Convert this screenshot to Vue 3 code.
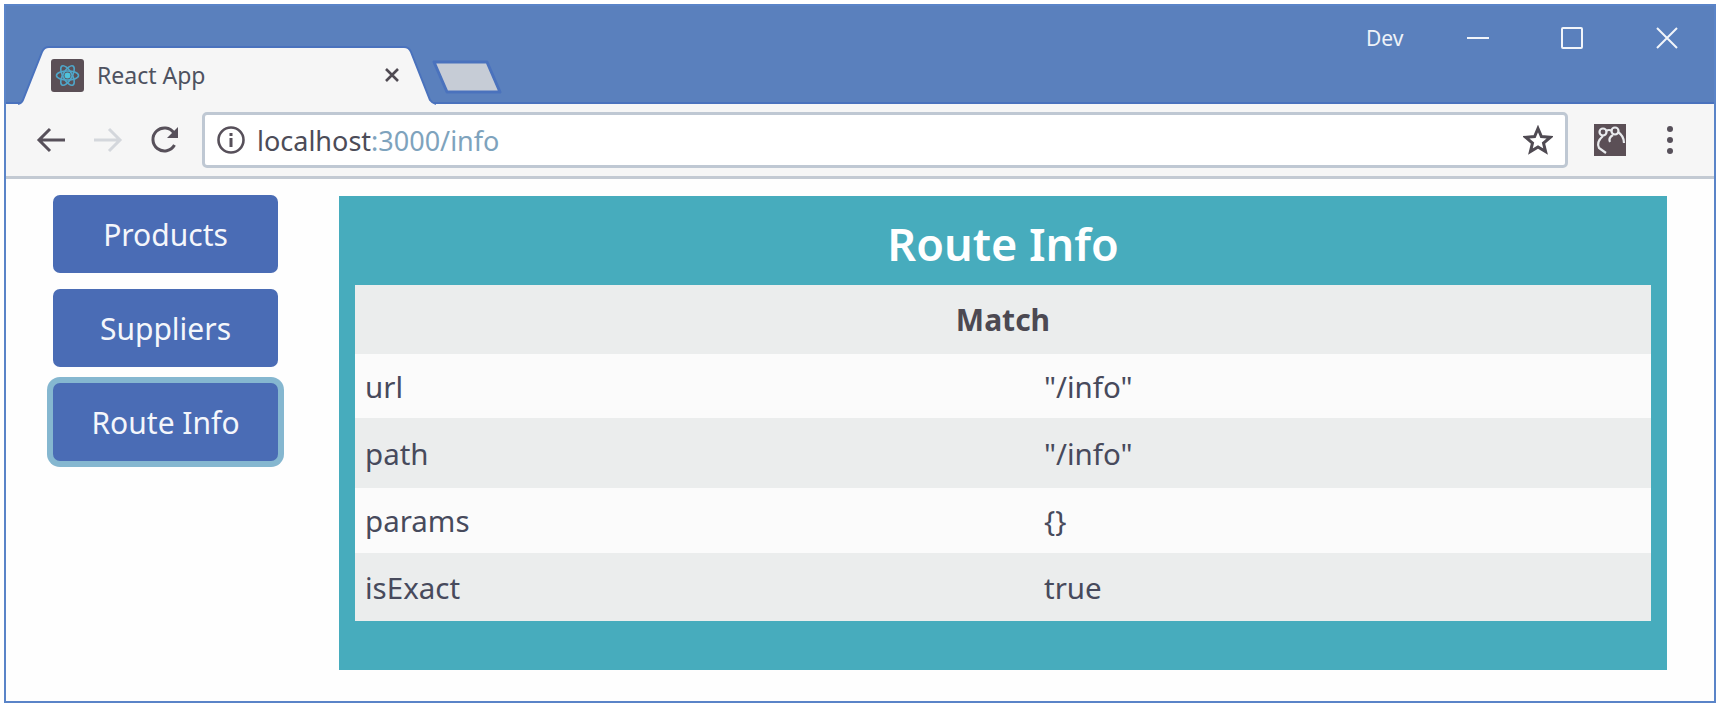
<script setup>
const navItems = [
  { label: "Products", focused: false },
  { label: "Suppliers", focused: false },
  { label: "Route Info", focused: true },
];

const rows = [
  { name: "url", value: '"/info"', height: 64 },
  { name: "path", value: '"/info"', height: 70 },
  { name: "params", value: "{}", height: 65 },
  { name: "isExact", value: "true", height: 68 },
];
</script>

<template>
  <div class="window">
    <header class="titlebar">
      <div class="tab">
        <svg class="tab-shape" width="418" height="60" viewBox="0 0 418 60">
          <path d="M0 60 L0 58 Q4 57 5 54 L24 6 Q26 1 31 1 L386 1 Q391 1 393 6 L412 54 Q414 57 418 58 L418 60 Z" fill="#f6f6f6" />
          <path d="M0 58 Q4 57 5 54 L24 6 Q26 1 31 1 L386 1 Q391 1 393 6 L412 54 Q414 57 418 58" fill="none" stroke="#4a72bd" stroke-width="2" />
        </svg>
        <span class="favicon">
          <svg width="33" height="33" viewBox="0 0 33 33">
            <rect width="33" height="33" rx="3" fill="#5b4f56" />
            <g fill="none" stroke="#4fa6c9" stroke-width="1.6">
              <ellipse cx="16.5" cy="16.5" rx="11" ry="4.5" />
              <ellipse cx="16.5" cy="16.5" rx="11" ry="4.5" transform="rotate(60 16.5 16.5)" />
              <ellipse cx="16.5" cy="16.5" rx="11" ry="4.5" transform="rotate(120 16.5 16.5)" />
            </g>
            <circle cx="16.5" cy="16.5" r="3" fill="#4fc3dc" />
          </svg>
        </span>
        <span class="tab-title">React App</span>
        <svg class="tab-close" width="16" height="16" viewBox="0 0 16 16">
          <path d="M2 2 L14 14 M14 2 L2 14" stroke="#4f4a52" stroke-width="2.6" />
        </svg>
      </div>
      <svg class="new-tab" width="70" height="34" viewBox="0 0 70 34">
        <path d="M2 2 L55 2 L68 32 L15 32 Z" fill="#c6ccd6" stroke="#4a72bd" stroke-width="3" stroke-linejoin="round" />
      </svg>
      <div class="window-controls">
        <span class="profile">Dev</span>
        <svg class="control minimize" width="22" height="4" viewBox="0 0 22 4">
          <path d="M0 2 H22" stroke="#f2f5fa" stroke-width="2" />
        </svg>
        <svg class="control maximize" width="22" height="22" viewBox="0 0 22 22">
          <rect x="1" y="1" width="20" height="20" rx="1" fill="none" stroke="#f2f5fa" stroke-width="2" />
        </svg>
        <svg class="control" width="22" height="22" viewBox="0 0 22 22">
          <path d="M1 1 L21 21 M21 1 L1 21" stroke="#f2f5fa" stroke-width="2" />
        </svg>
      </div>
    </header>

    <div class="toolbar">
      <svg class="nav-icon" width="30" height="30" viewBox="0 0 30 30">
        <path d="M29 15 H3 M14 4 L3 15 L14 26" fill="none" stroke="#57505a" stroke-width="3" />
      </svg>
      <svg class="nav-icon forward" width="30" height="30" viewBox="0 0 30 30">
        <path d="M1 15 H27 M16 4 L27 15 L16 26" fill="none" stroke="#d4d7dc" stroke-width="3" />
      </svg>
      <svg class="nav-icon reload" width="30" height="30" viewBox="0 0 30 30">
        <path d="M24.5 20 A11.5 11.5 0 1 1 24 8" fill="none" stroke="#57505a" stroke-width="3" />
        <path d="M28 2 V13 H17 Z" fill="#57505a" />
      </svg>
      <div class="omnibox">
        <svg width="30" height="30" viewBox="0 0 30 30">
          <circle cx="15" cy="15" r="12.5" fill="none" stroke="#57505a" stroke-width="2.6" />
          <rect x="13.5" y="13" width="3" height="9" fill="#57505a" />
          <rect x="13.5" y="8" width="3" height="3" fill="#57505a" />
        </svg>
        <span class="url"><span class="url-host">localhost</span>:3000/info</span>
        <svg class="star" width="30" height="30" viewBox="0 0 30 30">
          <path d="M15 3.5 L18.4 11.6 L27.2 12.3 L20.5 18 L22.6 26.6 L15 22 L7.4 26.6 L9.5 18 L2.8 12.3 L11.6 11.6 Z" fill="none" stroke="#4f4a52" stroke-width="3" />
        </svg>
      </div>
      <svg class="extension" width="32" height="32" viewBox="0 0 32 32">
        <rect width="32" height="32" fill="#5b4f56" />
        <g fill="none" stroke="#e9ebee" stroke-width="2.2">
          <circle cx="9" cy="8" r="3.5" />
          <circle cx="21" cy="7" r="3.5" />
          <path d="M12 7 Q15 5 18 7 M24 8 Q30 12 30 19 M9 12 Q2 18 5 24 L12 29 M16 18 Q14 14 19 11" />
        </g>
      </svg>
      <span class="menu-dots"><i></i><i></i><i></i></span>
    </div>

    <main class="page">
      <nav class="sidebar">
        <button
          v-for="item in navItems"
          :key="item.label"
          class="nav-button"
          :class="{ focused: item.focused }"
        >
          {{ item.label }}
        </button>
      </nav>

      <section class="panel">
        <h3 class="panel-title">Route Info</h3>
        <table class="info-table">
          <colgroup>
            <col class="name-col" />
            <col />
          </colgroup>
          <thead>
            <tr>
              <th colspan="2">Match</th>
            </tr>
          </thead>
          <tbody>
            <tr v-for="row in rows" :key="row.name" :style="{ height: row.height + 'px' }">
              <td>{{ row.name }}</td>
              <td>{{ row.value }}</td>
            </tr>
          </tbody>
        </table>
      </section>
    </main>
  </div>
</template>

<style>
html,
body {
  margin: 0;
  background: #ffffff;
}
</style>

<style scoped>
.window {
  box-sizing: border-box;
  width: 1712px;
  height: 699px;
  margin: 4px 0 0 4px;
  border: 2px solid #5a84c8;
  background: #fefefe;
  font-family: "Noto Sans", "Open Sans", sans-serif;
  color: #4c4952;
  overflow: hidden;
}

.titlebar {
  display: flex;
  align-items: flex-end;
  box-sizing: border-box;
  height: 98px;
  padding-left: 12px;
  background: #5a80bd;
  border-bottom: 2px solid #4a72bd;
}

.tab {
  position: relative;
  display: flex;
  align-items: center;
  box-sizing: border-box;
  width: 418px;
  height: 58px;
  margin-bottom: -2px;
  padding: 0 36px 0 33px;
}

.tab-shape {
  position: absolute;
  left: 0;
  top: 0;
}

.favicon {
  position: relative;
  display: flex;
  margin-right: 13px;
}

.tab-title {
  position: relative;
  flex: 1;
  font-size: 23px;
  color: #4e5260;
}

.tab-close {
  position: relative;
}

.new-tab {
  align-self: flex-start;
  margin: 54px 0 0 -4px;
}

.window-controls {
  align-self: flex-start;
  display: flex;
  align-items: center;
  margin-left: auto;
  padding: 18px 36px 0 0;
}

.profile {
  width: 40px;
  margin-right: 61px;
  font-size: 21px;
  color: #eef2f8;
}

.minimize {
  margin-right: 72px;
}

.maximize {
  margin-right: 73px;
}

.toolbar {
  display: flex;
  align-items: center;
  box-sizing: border-box;
  height: 75px;
  padding: 0 41px 0 30px;
  background: #f6f6f6;
  border-bottom: 3px solid #c3cad3;
}

.nav-icon {
  flex: none;
  margin-right: 27px;
}

.reload {
  margin-right: 22px;
}

.omnibox {
  display: flex;
  align-items: center;
  flex: 1;
  box-sizing: border-box;
  height: 56px;
  padding: 0 12px 0 11px;
  background: #ffffff;
  border: 3px solid #bfc8d3;
  border-radius: 5px;
}

.url {
  flex: 1;
  margin-left: 11px;
  font-size: 27px;
  color: #7ea3bd;
}

.url-host {
  color: #4c4c58;
}

.extension {
  flex: none;
  margin-left: 26px;
}

.menu-dots {
  display: flex;
  flex-direction: column;
  gap: 5px;
  margin-left: 41px;
}

.menu-dots i {
  display: block;
  width: 6px;
  height: 6px;
  border-radius: 50%;
  background: #57505a;
}

.page {
  display: flex;
  align-items: flex-start;
  padding: 16px 0 0 47px;
}

.sidebar {
  display: flex;
  flex-direction: column;
  gap: 16px;
  flex: none;
  width: 225px;
}

.nav-button {
  height: 78px;
  padding: 0;
  background: #4a6cb5;
  border: none;
  border-radius: 7px;
  font-family: inherit;
  font-size: 30px;
  color: #f4f6fb;
}

.nav-button.focused {
  box-shadow: 0 0 0 6px #85b7d0;
}

.panel {
  box-sizing: border-box;
  width: 1328px;
  height: 474px;
  margin: 1px 0 0 61px;
  padding: 0 16px;
  background: #47acbd;
}

.panel-title {
  margin: 0;
  height: 89px;
  line-height: 95px;
  font-size: 45px;
  font-weight: 600;
  text-align: center;
  color: #ffffff;
}

.info-table {
  width: 100%;
  border-collapse: collapse;
  table-layout: fixed;
  font-size: 29.5px;
  color: #474a5c;
}

.name-col {
  width: 679px;
}

.info-table th {
  height: 69px;
  padding: 0;
  background: #ebeded;
  font-size: 30px;
  font-weight: 700;
  text-align: center;
  color: #4c4952;
}

.info-table td {
  padding: 0 0 0 10px;
}

.info-table tbody tr:nth-child(odd) {
  background: #fbfbfb;
}

.info-table tbody tr:nth-child(even) {
  background: #ebeded;
}
</style>
